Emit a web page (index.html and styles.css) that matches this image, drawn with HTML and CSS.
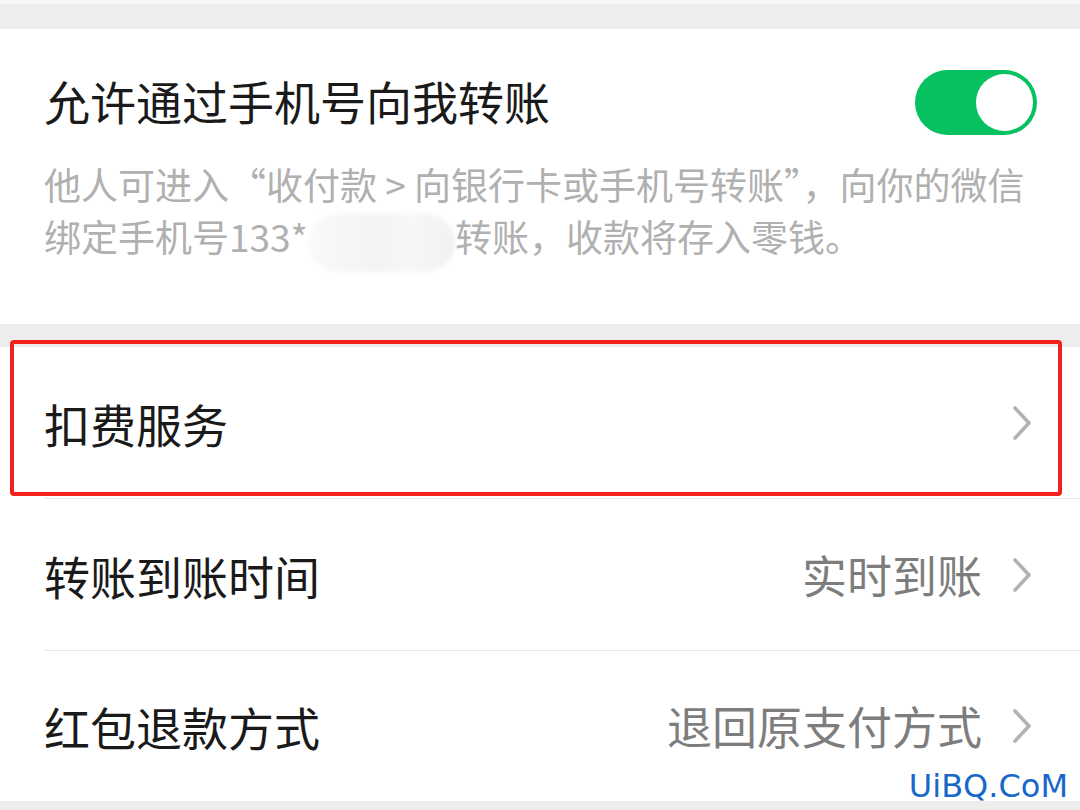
FILE: index.html
```html
<!DOCTYPE html>
<html lang="zh-CN">
<head>
    <meta charset="UTF-8">
    <meta name="viewport" content="width=device-width, initial-scale=1.0">
    <link rel="stylesheet" href="styles.css">
    <title>支付设置</title>
</head>
<body>
    <main class="page">
        <section class="card switch-card">
            <div class="switch-row">
                <h2>允许通过手机号向我转账</h2>
                <span class="toggle on"><span class="knob"></span></span>
            </div>
            <p class="desc">他人可进入“收付款 &gt; 向银行卡或手机号转账”，向你的微信<br>绑定手机号133*<span class="masked"></span>转账，收款将存入零钱。</p>
        </section>

        <section class="card list">
            <div class="row highlight">
                <span class="label">扣费服务</span>
                <span class="chevron"><svg viewBox="0 0 20 34" width="20" height="34"><path d="M3 2 L17 17 L3 32" fill="none" stroke="#b2b2b2" stroke-width="3.6" stroke-linecap="round" stroke-linejoin="round"/></svg></span>
            </div>
            <div class="row">
                <span class="label">转账到账时间</span>
                <span class="value">实时到账</span>
                <span class="chevron"><svg viewBox="0 0 20 34" width="20" height="34"><path d="M3 2 L17 17 L3 32" fill="none" stroke="#b2b2b2" stroke-width="3.6" stroke-linecap="round" stroke-linejoin="round"/></svg></span>
            </div>
            <div class="row">
                <span class="label">红包退款方式</span>
                <span class="value">退回原支付方式</span>
                <span class="chevron"><svg viewBox="0 0 20 34" width="20" height="34"><path d="M3 2 L17 17 L3 32" fill="none" stroke="#b2b2b2" stroke-width="3.6" stroke-linecap="round" stroke-linejoin="round"/></svg></span>
            </div>
        </section>
        <div class="watermark">UiBQ.CoM</div>
    </main>
</body>
</html>
```

FILE: styles.css
```css
*, ::after, ::before{
    margin: 0;
    padding: 0;
    box-sizing: border-box;
}
body{
    background: #ededed;
    font-family: 'Noto Sans CJK SC', 'Noto Sans', sans-serif;
    color: #1a1a1a;
    overflow: hidden;
}
.page{
    position: relative;
    width: 1080px;
    height: 810px;
    padding-top: 29px;
    border-top: 4px solid #f6f6f6;
}
.card{
    background: #fff;
}
.switch-card{
    padding: 38px 43px 62px 44px;
    margin-top: -4px;
    .switch-row{
        display: flex;
        justify-content: space-between;
        align-items: center;
        height: 66px;
    }
    h2{
        font-size: 46px;
        font-weight: 400;
        line-height: 66px;
    }
    .desc{
        margin-top: 25px;
        font-size: 37px;
        line-height: 52px;
        height: 104px;
        color: #b0b0b0;
    }
}
.toggle{
    display: flex;
    align-items: center;
    justify-content: flex-end;
    width: 122px;
    height: 65px;
    margin-top: 4px;
    border-radius: 33px;
    background: #07c160;
    padding: 4px;
    .knob{
        width: 57px;
        height: 57px;
        border-radius: 50%;
        background: #fff;
    }
}
.masked{
    display: inline-block;
    width: 147px;
    height: 58px;
    margin-bottom: -20px;
    border-radius: 29px;
    background: linear-gradient(90deg, #fafafa, #f3f3f3 45%, #f7f7f7 70%, #f1f1f1);
    filter: blur(2px);
}
.list{
    margin-top: 23px;
}
.row{
    position: relative;
    display: flex;
    align-items: center;
    height: 152px;
    margin-left: 44px;
    padding-right: 48px;
    border-bottom: 1px solid #e6e6e6;
    &:last-child{
        border-bottom: none;
        height: 150px;
    }
    .label{
        flex: 1;
        font-size: 46px;
        line-height: 60px;
    }
    .value{
        font-size: 45px;
        line-height: 60px;
        color: #7d7d7d;
        margin-right: 30px;
    }
    .chevron{
        display: flex;
        width: 20px;
    }
}
.highlight::after{
    content: '';
    position: absolute;
    left: -34px;
    right: 18px;
    top: -7px;
    bottom: 2px;
    border: 4px solid #f2211c;
    border-radius: 4px;
}
.watermark{
    position: absolute;
    right: 12px;
    bottom: 4px;
    font-family: 'DejaVu Sans', sans-serif;
    font-size: 32px;
    color: #1768c9;
    line-height: 40px;
}
```
